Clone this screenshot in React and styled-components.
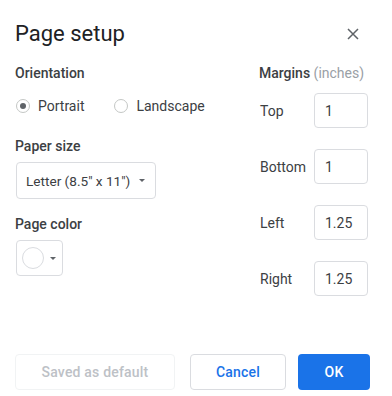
import React from "react";
import styled, { createGlobalStyle } from "styled-components";

const margins = [
  { label: "Top", value: "1" },
  { label: "Bottom", value: "1" },
  { label: "Left", value: "1.25" },
  { label: "Right", value: "1.25" },
];

const App = () => {
  return (
    <Dialog>
      <GlobalStyle />
      <Header>
        <Title>Page setup</Title>
        <CloseButton type="button" aria-label="Close">
          <svg width="12" height="12" viewBox="0 0 12 12">
            <path d="M1 1L11 11M11 1L1 11" stroke="#5f6368" strokeWidth="1.5" />
          </svg>
        </CloseButton>
      </Header>
      <Body>
        <LeftColumn>
          <SectionLabel>Orientation</SectionLabel>
          <RadioRow>
            <RadioOption>
              <Radio $checked />
              Portrait
            </RadioOption>
            <RadioOption>
              <Radio />
              Landscape
            </RadioOption>
          </RadioRow>
          <SectionLabel $top={20}>Paper size</SectionLabel>
          <Select>
            Letter (8.5" x 11")
            <Caret />
          </Select>
          <SectionLabel $top={15}>Page color</SectionLabel>
          <ColorButton>
            <Swatch />
            <Caret />
          </ColorButton>
        </LeftColumn>
        <RightColumn>
          <SectionLabel>
            Margins <Muted>(inches)</Muted>
          </SectionLabel>
          <MarginList>
            {margins.map((m) => (
              <MarginRow key={m.label}>
                <MarginLabel>{m.label}</MarginLabel>
                <MarginInput defaultValue={m.value} />
              </MarginRow>
            ))}
          </MarginList>
        </RightColumn>
      </Body>
      <Footer>
        <GhostButton type="button" disabled>
          Saved as default
        </GhostButton>
        <OutlineButton type="button">Cancel</OutlineButton>
        <PrimaryButton type="button">OK</PrimaryButton>
      </Footer>
    </Dialog>
  );
};

const GlobalStyle = createGlobalStyle`
  body {
    margin: 0;
    background: #fff;
    font-family: Roboto, "Liberation Sans", Arial, sans-serif;
  }
  button,
  input {
    appearance: none;
    font-family: inherit;
  }
`;

const Dialog = styled.div`
  width: 392px;
  height: 396px;
  box-sizing: border-box;
  padding: 20px 22px 0 15px;
  color: #3c4043;
`;

const Header = styled.div`
  display: flex;
  justify-content: space-between;
  align-items: center;
  height: 28px;
`;

const Title = styled.h1`
  margin: 0;
  font-size: 22px;
  line-height: 28px;
  font-weight: 400;
  color: #202124;
`;

const CloseButton = styled.button`
  display: flex;
  align-items: center;
  justify-content: center;
  width: 24px;
  height: 24px;
  padding: 0;
  margin-right: 5px;
  border: 0;
  background: none;
`;

const Body = styled.div`
  display: grid;
  grid-template-columns: 1fr 111px;
  margin-top: 15px;
  height: 264px;
`;

const LeftColumn = styled.div`
  display: flex;
  flex-direction: column;
  align-items: flex-start;
`;

const RightColumn = styled.div`
  display: flex;
  flex-direction: column;
`;

const SectionLabel = styled.div`
  margin-top: ${(p) => p.$top || 0}px;
  font-size: 14px;
  line-height: 20px;
  font-weight: 500;
  color: #3c4043;
`;

const Muted = styled.span`
  font-weight: 400;
  color: #9aa0a6;
`;

const RadioRow = styled.div`
  display: flex;
  gap: 30px;
  margin-top: 13px;
  padding-left: 1px;
`;

const RadioOption = styled.label`
  display: flex;
  align-items: center;
  gap: 8px;
  font-size: 14px;
  line-height: 20px;
  color: #3c4043;
`;

const Radio = styled.span`
  position: relative;
  width: 14px;
  height: 14px;
  box-sizing: border-box;
  border: 1px solid #c4c7c5;
  border-radius: 50%;

  &::after {
    content: "";
    display: ${(p) => (p.$checked ? "block" : "none")};
    position: absolute;
    top: 3px;
    left: 3px;
    width: 6px;
    height: 6px;
    border-radius: 50%;
    background: #5f6368;
  }
`;

const Select = styled.div`
  display: flex;
  align-items: center;
  justify-content: space-between;
  margin-top: 6px;
  margin-left: 1px;
  width: 140px;
  height: 37px;
  box-sizing: border-box;
  padding: 0 10px 0 9px;
  border: 1px solid #dadce0;
  border-radius: 4px;
  font-size: 13.6px;
  color: #3c4043;
  white-space: nowrap;
`;

const Caret = styled.span`
  width: 0;
  height: 0;
  border-left: 3.5px solid transparent;
  border-right: 3.5px solid transparent;
  border-top: 3.5px solid #5f6368;
`;

const ColorButton = styled.div`
  display: flex;
  align-items: center;
  gap: 6px;
  margin-top: 6px;
  margin-left: 1px;
  width: 47px;
  height: 36px;
  box-sizing: border-box;
  padding: 0 0 0 5px;
  border: 1px solid #dadce0;
  border-radius: 4px;
`;

const Swatch = styled.span`
  width: 22px;
  height: 22px;
  box-sizing: border-box;
  border: 1px solid #dadce0;
  border-radius: 50%;
  background: #fff;
`;

const MarginList = styled.div`
  display: flex;
  flex-direction: column;
  gap: 21px;
  margin-top: 10px;
`;

const MarginRow = styled.div`
  display: flex;
  align-items: center;
`;

const MarginLabel = styled.span`
  width: 54px;
  padding-left: 1px;
  font-size: 14px;
  color: #3c4043;
`;

const MarginInput = styled.input`
  width: 54px;
  height: 35px;
  box-sizing: border-box;
  padding: 0 10px;
  border: 1px solid #dadce0;
  border-radius: 4px;
  font-size: 14px;
  color: #3c4043;
  outline: 0;
`;

const Footer = styled.div`
  display: flex;
  align-items: center;
  margin-top: 27px;
  margin-right: -3px;
`;

const BaseButton = styled.button`
  height: 36px;
  box-sizing: border-box;
  border-radius: 4px;
  font-size: 14px;
  font-weight: 500;
  letter-spacing: 0.2px;
  padding: 0;
`;

const GhostButton = styled(BaseButton)`
  width: 160px;
  border: 1px solid #f1f3f4;
  background: #fff;
  color: #bdc1c6;
`;

const OutlineButton = styled(BaseButton)`
  width: 96px;
  margin-left: 15px;
  border: 1px solid #dadce0;
  background: #fff;
  color: #1a73e8;
`;

const PrimaryButton = styled(BaseButton)`
  width: 72px;
  margin-left: 12px;
  border: 0;
  background: #1a73e8;
  color: #fff;
`;

export default App;
